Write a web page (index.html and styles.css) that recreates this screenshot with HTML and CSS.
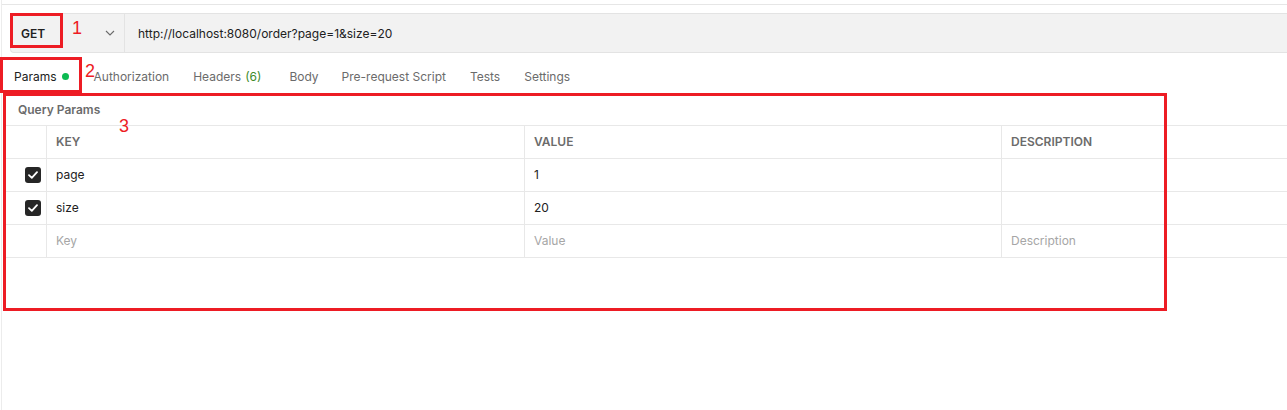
FILE: index.html
```html
<!DOCTYPE html>
<html lang="en">
<head>
<meta charset="utf-8">
<title>Request</title>
<link rel="stylesheet" href="styles.css">
</head>
<body>
<div class="app">
  <div class="topbar"></div>
  <div class="urlbar">
    <div class="method">
      <span class="method-name">GET</span>
      <svg class="chev" width="10" height="6" viewBox="0 0 10 6"><path d="M1 1 L5 5 L9 1" fill="none" stroke="#6b6b6b" stroke-width="1.1"/></svg>
    </div>
    <div class="url">http://localhost:8080/order?page=1&amp;size=20</div>
  </div>
  <div class="tabs">
    <div class="tab active">Params <span class="dot"></span></div>
    <div class="tab">Authorization</div>
    <div class="tab tab-headers">Headers <span class="count">(6)</span></div>
    <div class="tab tab-body">Body</div>
    <div class="tab">Pre-request Script</div>
    <div class="tab">Tests</div>
    <div class="tab">Settings</div>
  </div>
  <div class="section-title">Query Params</div>
  <div class="table">
    <div class="cell"></div>
    <div class="cell head sep">KEY</div>
    <div class="cell head sep">VALUE</div>
    <div class="cell head sep">DESCRIPTION</div>

    <div class="cell chk"><span class="box"><svg width="10" height="8" viewBox="0 0 10 8"><path d="M1 4.2 L3.8 6.8 L9 1.2" fill="none" stroke="#fff" stroke-width="1.8" stroke-linecap="round" stroke-linejoin="round"/></svg></span></div>
    <div class="cell sep">page</div>
    <div class="cell sep">1</div>
    <div class="cell sep"></div>

    <div class="cell chk"><span class="box"><svg width="10" height="8" viewBox="0 0 10 8"><path d="M1 4.2 L3.8 6.8 L9 1.2" fill="none" stroke="#fff" stroke-width="1.8" stroke-linecap="round" stroke-linejoin="round"/></svg></span></div>
    <div class="cell sep">size</div>
    <div class="cell sep">20</div>
    <div class="cell sep"></div>

    <div class="cell last"></div>
    <div class="cell sep ph last">Key</div>
    <div class="cell sep ph last">Value</div>
    <div class="cell sep ph last">Description</div>
  </div>

  <div class="mark mark1"></div>
  <div class="mark mark2"></div>
  <div class="mark mark3"></div>
  <div class="num num1">1</div>
  <div class="num num2">2</div>
  <div class="num num3">3</div>
</div>
</body>
</html>
```
FILE: styles.css
```css
html, body {
  margin: 0;
  padding: 0;
  background: #fff;
}
body {
  font-family: Inter, "Noto Sans", sans-serif;
  font-size: 12px;
  color: #212121;
  overflow: hidden;
}
.app {
  position: relative;
  margin-left: 1px;
  border-left: 1px solid #ececec;
  height: 410px;
}
.topbar {
  height: 4px;
  border-bottom: 1px solid #e6e6e6;
}
.urlbar {
  display: flex;
  margin: 8px 0 0 8px;
  height: 38px;
  background: #f2f2f2;
  border: 1px solid #e3e3e3;
  border-right: none;
  border-radius: 4px 0 0 4px;
}
.method {
  display: flex;
  align-items: center;
  justify-content: space-between;
  width: 114px;
  box-sizing: border-box;
  padding: 0 9px 0 10px;
  border-right: 1px solid #e3e3e3;
}
.method-name {
  font-weight: 600;
  color: #212121;
}
.chev {
  display: block;
}
.url {
  display: flex;
  align-items: center;
  padding-left: 13px;
  color: #212121;
}
.tabs {
  display: flex;
  align-items: center;
  height: 31px;
  padding: 8px 0 1px 0;
}
.tab {
  display: flex;
  align-items: center;
  padding: 0 12px;
  color: #6b6b6b;
  white-space: nowrap;
}
.tab.active {
  color: #212121;
  padding-right: 13px;
}
.tab-headers {
  padding-right: 16px;
}
.tab-body {
  padding-right: 11px;
}
.dot {
  display: inline-block;
  width: 7px;
  height: 7px;
  border-radius: 50%;
  background: #0cbb52;
  margin-left: 5px;
}
.count {
  color: #3d8a2a;
  margin-left: 4px;
}
.section-title {
  height: 32px;
  box-sizing: border-box;
  padding: 9px 0 0 16px;
  line-height: 16px;
  font-weight: 600;
  color: #6b6b6b;
}
.table {
  display: grid;
  grid-template-columns: 41px 478px 477px 1fr;
  margin-left: 3px;
}
.cell {
  box-sizing: border-box;
  height: 33px;
  border-top: 1px solid #e8e8e8;
  display: flex;
  align-items: center;
  padding: 0 0 1px 9px;
  white-space: nowrap;
}
.cell.sep {
  border-left: 1px solid #e8e8e8;
}
.cell.last {
  height: 34px;
  border-bottom: 1px solid #e8e8e8;
}
.cell.head {
  font-weight: 600;
  color: #6b6b6b;
}
.cell.ph {
  color: #a6a6a6;
}
.cell.chk {
  padding-left: 20px;
  padding-bottom: 0;
}
.box {
  width: 16px;
  height: 16px;
  border-radius: 3px;
  background: #262626;
  display: flex;
  align-items: center;
  justify-content: center;
}
.box svg {
  display: block;
}
.mark {
  position: absolute;
  border: 3px solid #ed1c24;
  box-sizing: border-box;
}
.mark1 {
  left: 8px;
  top: 13px;
  width: 53px;
  height: 35px;
}
.mark2 {
  left: -2px;
  top: 57px;
  width: 82px;
  height: 36px;
}
.mark3 {
  left: 1px;
  top: 93px;
  width: 1164px;
  height: 218px;
}
.num {
  position: absolute;
  font-family: "Liberation Sans", Arial, sans-serif;
  font-size: 18px;
  line-height: 18px;
  color: #ed1c24;
}
.num1 {
  left: 70px;
  top: 19px;
}
.num2 {
  left: 83px;
  top: 62px;
}
.num3 {
  left: 117px;
  top: 117px;
}
```
